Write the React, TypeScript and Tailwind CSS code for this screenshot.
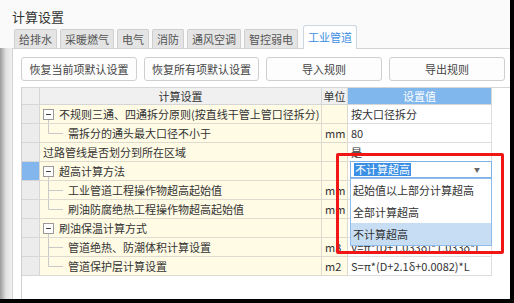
import React from 'react';

type Row = {
  kind: 'group' | 'child' | 'plain';
  text: string;
  unit?: string;
  value?: string;
  last?: boolean;
  selected?: boolean;
};

const rows: Row[] = [
  { kind: 'group', text: '不规则三通、四通拆分原则(按直线干管上管口径拆分)', value: '按大口径拆分' },
  { kind: 'child', text: '需拆分的通头最大口径不小于', unit: 'mm', value: '80', last: true },
  { kind: 'plain', text: '过路管线是否划分到所在区域', value: '是' },
  { kind: 'group', text: '超高计算方法', selected: true },
  { kind: 'child', text: '工业管道工程操作物超高起始值', unit: 'mm' },
  { kind: 'child', text: '刷油防腐绝热工程操作物超高起始值', unit: 'mm', last: true },
  { kind: 'group', text: '刷油保温计算方式' },
  { kind: 'child', text: '管道绝热、防潮体积计算设置', unit: 'm3', value: 'V=π*(D+1.033δ)*1.033δ*L' },
  { kind: 'child', text: '管道保护层计算设置', unit: 'm2', value: 'S=π*(D+2.1δ+0.0082)*L', last: true },
];

const tabs = ['给排水', '采暖燃气', '电气', '消防', '通风空调', '智控弱电'];
const buttons = [
  { label: '恢复当前项默认设置', w: 'w-[116px]' },
  { label: '恢复所有项默认设置', w: 'w-[115px]' },
  { label: '导入规则', w: 'w-[116px]' },
  { label: '导出规则', w: 'w-[116px]' },
];

function GroupIcon() {
  return (
    <svg width="16" height="19" className="shrink-0">
      <rect x="0.5" y="4.5" width="10" height="10" fill="#fff" stroke="#9a9a9a" />
      <line x1="3" y1="9.5" x2="8" y2="9.5" stroke="#444" />
      <line x1="5.5" y1="15" x2="5.5" y2="19" stroke="#c8c8c8" />
    </svg>
  );
}

function ChildLines({ last }: { last?: boolean }) {
  return (
    <svg width="25" height="19" className="shrink-0">
      <line x1="5.5" y1="0" x2="5.5" y2={last ? 9.5 : 19} stroke="#c8c8c8" />
      <line x1="5.5" y1="9.5" x2="20" y2="9.5" stroke="#c8c8c8" />
    </svg>
  );
}

export default function App() {
  return (
    <div className="w-[514px] h-[303px] overflow-hidden bg-black">
      <div
        className="relative w-[510px] h-[299px] bg-[#fafafa] flex flex-col text-[#333]"
        style={{ fontFamily: '"Noto Sans CJK SC", "Noto Sans", sans-serif' }}
      >
        <div className="h-[25px] pl-[12px] pt-[9px] text-[13px] leading-[16px] text-[#333]">计算设置</div>

        <div className="flex items-end h-[23px] pl-[14px] gap-[3px]">
          {tabs.map(t => (
            <div key={t}
              className="h-[19px] px-[4px] border border-b-0 border-[#cfcfcf] bg-[#e4e4e4] rounded-t-[2px] text-[11px] leading-[18px] text-[#555]">
              {t}
            </div>
          ))}
          <div className="relative z-10 ml-[2px] -mb-[1px] h-[24px] px-[4px] border border-b-0 border-[#cdd6e2] bg-white rounded-t-[3px] text-[11px] leading-[22px] text-[#3b8ce3]">
            工业管道
          </div>
        </div>

        <div className="flex flex-1">
          <div className="w-[12px] bg-gradient-to-r from-[#9c9c9c] via-[#e2e2e2] to-[#f0f0f0]" />
          <div className="flex-1 flex flex-col border-l border-t border-[#d3d3d3] bg-white pl-[8px] pt-[8px]">
            <div className="flex gap-[7px]">
              {buttons.map(b => (
                <div key={b.label}
                  className={`${b.w} h-[24px] flex items-center justify-center border border-[#cfcfcf] rounded-[3px] bg-[#fdfdfd] text-[11px] text-[#444]`}>
                  {b.label}
                </div>
              ))}
            </div>

            <div className="flex-1 mt-[6px] border-l border-[#d0d0d0]">
              <div className="grid grid-cols-[18px_282px_26px_144px] text-[11px] leading-[18px] border-t border-[#d6d6d6]">
                <div className="h-[17px] bg-[#f0f0f0] border-r border-b border-[#d6d6d6]" />
                <div className="h-[17px] bg-[#f0f0f0] border-r border-b border-[#d6d6d6] text-center leading-[16px]">计算设置</div>
                <div className="h-[17px] bg-[#f0f0f0] border-r border-b border-[#d6d6d6] text-center leading-[16px]">单位</div>
                <div className="h-[17px] bg-[#80b7ed] border-r border-b border-[#d6d6d6] text-center leading-[16px] text-white">设置值</div>

                {rows.map((r, i) => (
                  <React.Fragment key={i}>
                    <div className={`h-[19px] border-r border-b border-[#d6d6d6] ${r.selected ? 'bg-[#82b6ec]' : 'bg-[#ececec]'}`} />
                    <div className="h-[19px] flex items-center pl-[3px] bg-[#fffbe5] border-r border-b border-[#dedad0] whitespace-nowrap overflow-hidden">
                      {r.kind === 'group' && <GroupIcon />}
                      {r.kind === 'child' && <ChildLines last={r.last} />}
                      <span>{r.text}</span>
                    </div>
                    <div className="h-[19px] pl-[3px] bg-[#fffbe5] border-r border-b border-[#dedad0]">{r.unit}</div>
                    <div className="h-[19px] pl-[3px] bg-white border-r border-b border-[#dedede] whitespace-nowrap overflow-hidden">{r.value}</div>
                  </React.Fragment>
                ))}
              </div>
            </div>
          </div>
        </div>

        {/* open combo box */}
        <div className="absolute left-[350px] top-[161px] w-[142px] h-[17px] border border-[#7eb4ea] bg-white flex items-center pl-[3px] text-[11px]">
          <span className="bg-[#3b8fe5] text-white leading-[13px] px-[1px]">不计算超高</span>
          <span className="ml-auto mr-[11px] text-[6px] text-[#666]">▼</span>
        </div>
        <div className="absolute left-[350px] top-[178px] w-[142px] border border-[#8fbce8] bg-white text-[11px] flex flex-col">
          <div className="h-[22px] leading-[22px] pl-[2px]">起始值以上部分计算超高</div>
          <div className="h-[22px] leading-[22px] pl-[2px]">全部计算超高</div>
          <div className="h-[22px] leading-[22px] pl-[2px] bg-[#c6ddf3]">不计算超高</div>
        </div>
        <div className="absolute left-[336px] top-[153px] w-[168px] h-[101px] border-[3px] border-[#f01616] rounded-[2px]" />
      </div>
    </div>
  );
}
